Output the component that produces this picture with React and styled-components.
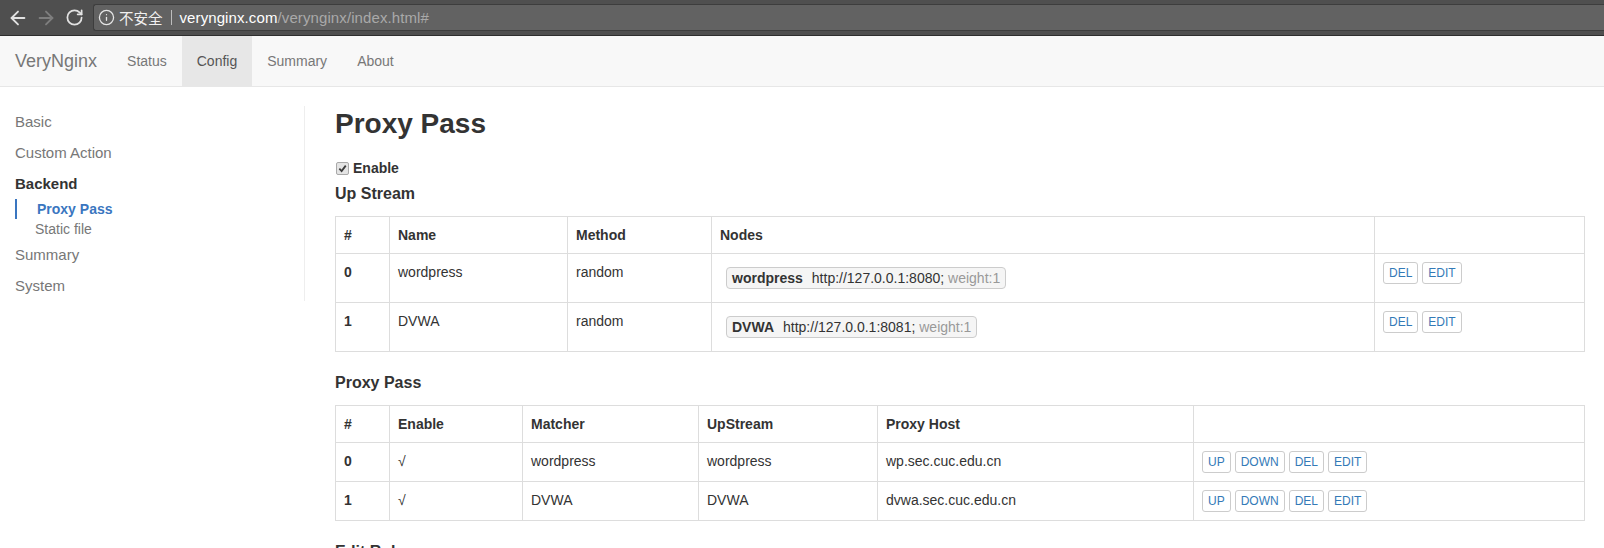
import React from 'react';
import styled, { createGlobalStyle } from 'styled-components';
import { ArrowLeft, ArrowRight, RotateCw, Info } from 'lucide-react';

const SANS = '"Liberation Sans", Arial, Helvetica, sans-serif';
const BORDER = '#ddd';
const LINK = '#337ab7';

const GlobalStyle = createGlobalStyle`
  html, body {
    margin: 0;
    padding: 0;
    height: 100%;
    overflow: hidden;
    background: #fff;
  }
  body {
    font-family: ${SANS};
    font-size: 14px;
    line-height: 20px;
    color: #333;
  }
  * {
    box-sizing: border-box;
  }
`;

/* browser chrome */

const ChromeBar = styled.div`
  display: flex;
  align-items: center;
  height: 36px;
  padding-left: 4px;
  background: #4f4f4f;
  border-bottom: 1px solid #2e2e2e;
`;

const ChromeButton = styled.div`
  display: flex;
  align-items: center;
  justify-content: center;
  width: 28px;
  height: 28px;
  color: ${props => (props.dim ? '#7e7e7e' : '#e2e2e2')};
`;

const Omnibox = styled.div`
  flex: 1;
  display: flex;
  align-items: center;
  height: 27px;
  margin-left: 5px;
  padding-left: 4px;
  background: #626262;
  border: 1px solid #3d3d3d;
  border-right: none;
  border-radius: 3px 0 0 3px;
  color: #e6e6e6;
`;

const Insecure = styled.span`
  margin-left: 4px;
  font-family: "Noto Sans CJK SC", sans-serif;
  font-size: 14.5px;
  line-height: 18px;
  color: #f0f0f0;
`;

const Divider = styled.span`
  width: 1px;
  height: 15px;
  margin: 0 8px;
  background: #bdbdbd;
`;

const Url = styled.span`
  font-family: ${SANS};
  font-size: 15px;
  color: #a9a9a9;
  letter-spacing: 0.1px;

  b {
    font-weight: normal;
    color: #fff;
  }
`;

/* navbar */

const Navbar = styled.nav`
  display: flex;
  height: 51px;
  margin-bottom: 19px;
  background: #f8f8f8;
  border-bottom: 1px solid #e7e7e7;
`;

const Brand = styled.a`
  padding: 15px;
  font-size: 18px;
  line-height: 20px;
  color: #777;
  text-decoration: none;
`;

const NavLink = styled.a`
  padding: 15px;
  font-size: 14px;
  line-height: 20px;
  color: ${props => (props.active ? '#555' : '#777')};
  background: ${props => (props.active ? '#e7e7e7' : 'transparent')};
  text-decoration: none;
`;

/* page */

const Page = styled.div`
  display: grid;
  grid-template-columns: 320px 1fr;
`;

const Sidebar = styled.ul`
  list-style: none;
  align-self: start;
  margin: 0 15px;
  padding: 0;
  border-right: 1px solid #eee;
`;

const SideItem = styled.li`
  padding: 5px 0;
  font-size: 15px;
  line-height: 21px;
  font-weight: ${props => (props.active ? 'bold' : 'normal')};
  color: ${props => (props.active ? '#333' : '#777')};
`;

const SubList = styled.ul`
  list-style: none;
  margin: 0;
  padding: 0;
`;

const SubItem = styled.li`
  padding-left: 20px;
  font-size: 14px;
  line-height: 20px;
  font-weight: ${props => (props.active ? 'bold' : 'normal')};
  color: ${props => (props.active ? '#3a76c0' : '#777')};
  border-left: ${props => (props.active ? '2px solid #3a76c0' : 'none')};
`;

const Main = styled.main`
  padding: 0 20px 0 15px;
`;

const Title = styled.h1`
  margin: 2px 0 18px;
  font-size: 28px;
  line-height: 32px;
  font-weight: bold;
`;

const EnableRow = styled.label`
  display: flex;
  align-items: center;
  gap: 4px;
  margin-bottom: 6px;
  padding-left: 1px;
  font-weight: bold;
`;

const CheckBox = styled.span`
  display: flex;
  align-items: center;
  justify-content: center;
  width: 13px;
  height: 13px;
  background: #e4e4e4;
  border: 1px solid #a9a9a9;
  border-radius: 2px;
  color: #3b3b3b;
`;

const SectionTitle = styled.h3`
  margin: 0 0 12px;
  font-size: 16px;
  line-height: 20px;
  font-weight: bold;
`;

const Table = styled.table`
  width: 100%;
  table-layout: fixed;
  border-collapse: collapse;
  margin-bottom: 21px;
`;

const Th = styled.th`
  padding: 8px;
  text-align: left;
  vertical-align: top;
  font-weight: bold;
  border: 1px solid ${BORDER};
`;

const Td = styled.td`
  padding: 8px;
  vertical-align: top;
  font-weight: ${props => (props.bold ? 'bold' : 'normal')};
  border: 1px solid ${BORDER};
`;

const NodeList = styled.div`
  display: flex;
  flex-wrap: wrap;
`;

const Node = styled.span`
  display: flex;
  align-items: center;
  height: 22px;
  margin: 5px 0 5px 6px;
  padding: 0 5px;
  background: #f5f5f5;
  border: 1px solid #ccc;
  border-radius: 4px;
  white-space: nowrap;

  b {
    margin-right: 9px;
  }
`;

const Weight = styled.span`
  color: #999;
`;

const Actions = styled.div`
  display: flex;
  gap: 4px;
`;

const SmallButton = styled.button`
  height: 22px;
  padding: 1px 5px;
  font-family: ${SANS};
  font-size: 12px;
  line-height: 18px;
  color: ${LINK};
  background: #fff;
  border: 1px solid #ccc;
  border-radius: 3px;
`;

const upstreams = [
  { id: 0, name: 'wordpress', method: 'random', node: 'wordpress', url: 'http://127.0.0.1:8080;' },
  { id: 1, name: 'DVWA', method: 'random', node: 'DVWA', url: 'http://127.0.0.1:8081;' }
];

const proxies = [
  { id: 0, matcher: 'wordpress', upstream: 'wordpress', host: 'wp.sec.cuc.edu.cn' },
  { id: 1, matcher: 'DVWA', upstream: 'DVWA', host: 'dvwa.sec.cuc.edu.cn' }
];

const Cols = ({ widths }) => (
  <colgroup>
    {widths.map((w, i) => <col key={i} style={{ width: w }} />)}
  </colgroup>
);

const App = () => (
  <>
    <GlobalStyle />
    <ChromeBar>
      <ChromeButton><ArrowLeft size={22} strokeWidth={2} /></ChromeButton>
      <ChromeButton dim><ArrowRight size={22} strokeWidth={2} /></ChromeButton>
      <ChromeButton><RotateCw size={19} strokeWidth={2.2} /></ChromeButton>
      <Omnibox>
        <Info size={17} strokeWidth={1.8} />
        <Insecure>不安全</Insecure>
        <Divider />
        <Url><b>verynginx.com</b>/verynginx/index.html#</Url>
      </Omnibox>
    </ChromeBar>

    <Navbar>
      <Brand>VeryNginx</Brand>
      <NavLink>Status</NavLink>
      <NavLink active>Config</NavLink>
      <NavLink>Summary</NavLink>
      <NavLink>About</NavLink>
    </Navbar>

    <Page>
      <Sidebar>
        <SideItem>Basic</SideItem>
        <SideItem>Custom Action</SideItem>
        <SideItem active>Backend</SideItem>
        <SubList>
          <SubItem active>Proxy Pass</SubItem>
          <SubItem>Static file</SubItem>
        </SubList>
        <SideItem>Summary</SideItem>
        <SideItem>System</SideItem>
      </Sidebar>

      <Main>
        <Title>Proxy Pass</Title>
        <EnableRow>
          <CheckBox>
            <svg width="9" height="9" viewBox="0 0 10 10">
              <path d="M1.5 5.2 L4 7.8 L8.6 1.8" fill="none" stroke="currentColor" strokeWidth="2" />
            </svg>
          </CheckBox>
          Enable
        </EnableRow>

        <SectionTitle>Up Stream</SectionTitle>
        <Table>
          <Cols widths={[54, 178, 144, 663, 210]} />
          <thead>
            <tr>
              <Th>#</Th>
              <Th>Name</Th>
              <Th>Method</Th>
              <Th>Nodes</Th>
              <Th />
            </tr>
          </thead>
          <tbody>
            {upstreams.map(u => (
              <tr key={u.id}>
                <Td bold>{u.id}</Td>
                <Td>{u.name}</Td>
                <Td>{u.method}</Td>
                <Td>
                  <NodeList>
                    <Node>
                      <b>{u.node}</b>
                      {u.url}
                      <Weight>&nbsp;weight:1</Weight>
                    </Node>
                  </NodeList>
                </Td>
                <Td>
                  <Actions>
                    <SmallButton>DEL</SmallButton>
                    <SmallButton>EDIT</SmallButton>
                  </Actions>
                </Td>
              </tr>
            ))}
          </tbody>
        </Table>

        <SectionTitle>Proxy Pass</SectionTitle>
        <Table>
          <Cols widths={[54, 133, 176, 179, 316, 391]} />
          <thead>
            <tr>
              <Th>#</Th>
              <Th>Enable</Th>
              <Th>Matcher</Th>
              <Th>UpStream</Th>
              <Th>Proxy Host</Th>
              <Th />
            </tr>
          </thead>
          <tbody>
            {proxies.map(p => (
              <tr key={p.id}>
                <Td bold>{p.id}</Td>
                <Td>√</Td>
                <Td>{p.matcher}</Td>
                <Td>{p.upstream}</Td>
                <Td>{p.host}</Td>
                <Td>
                  <Actions>
                    <SmallButton>UP</SmallButton>
                    <SmallButton>DOWN</SmallButton>
                    <SmallButton>DEL</SmallButton>
                    <SmallButton>EDIT</SmallButton>
                  </Actions>
                </Td>
              </tr>
            ))}
          </tbody>
        </Table>

        <SectionTitle>Edit Rules</SectionTitle>
      </Main>
    </Page>
  </>
);

export default App;
